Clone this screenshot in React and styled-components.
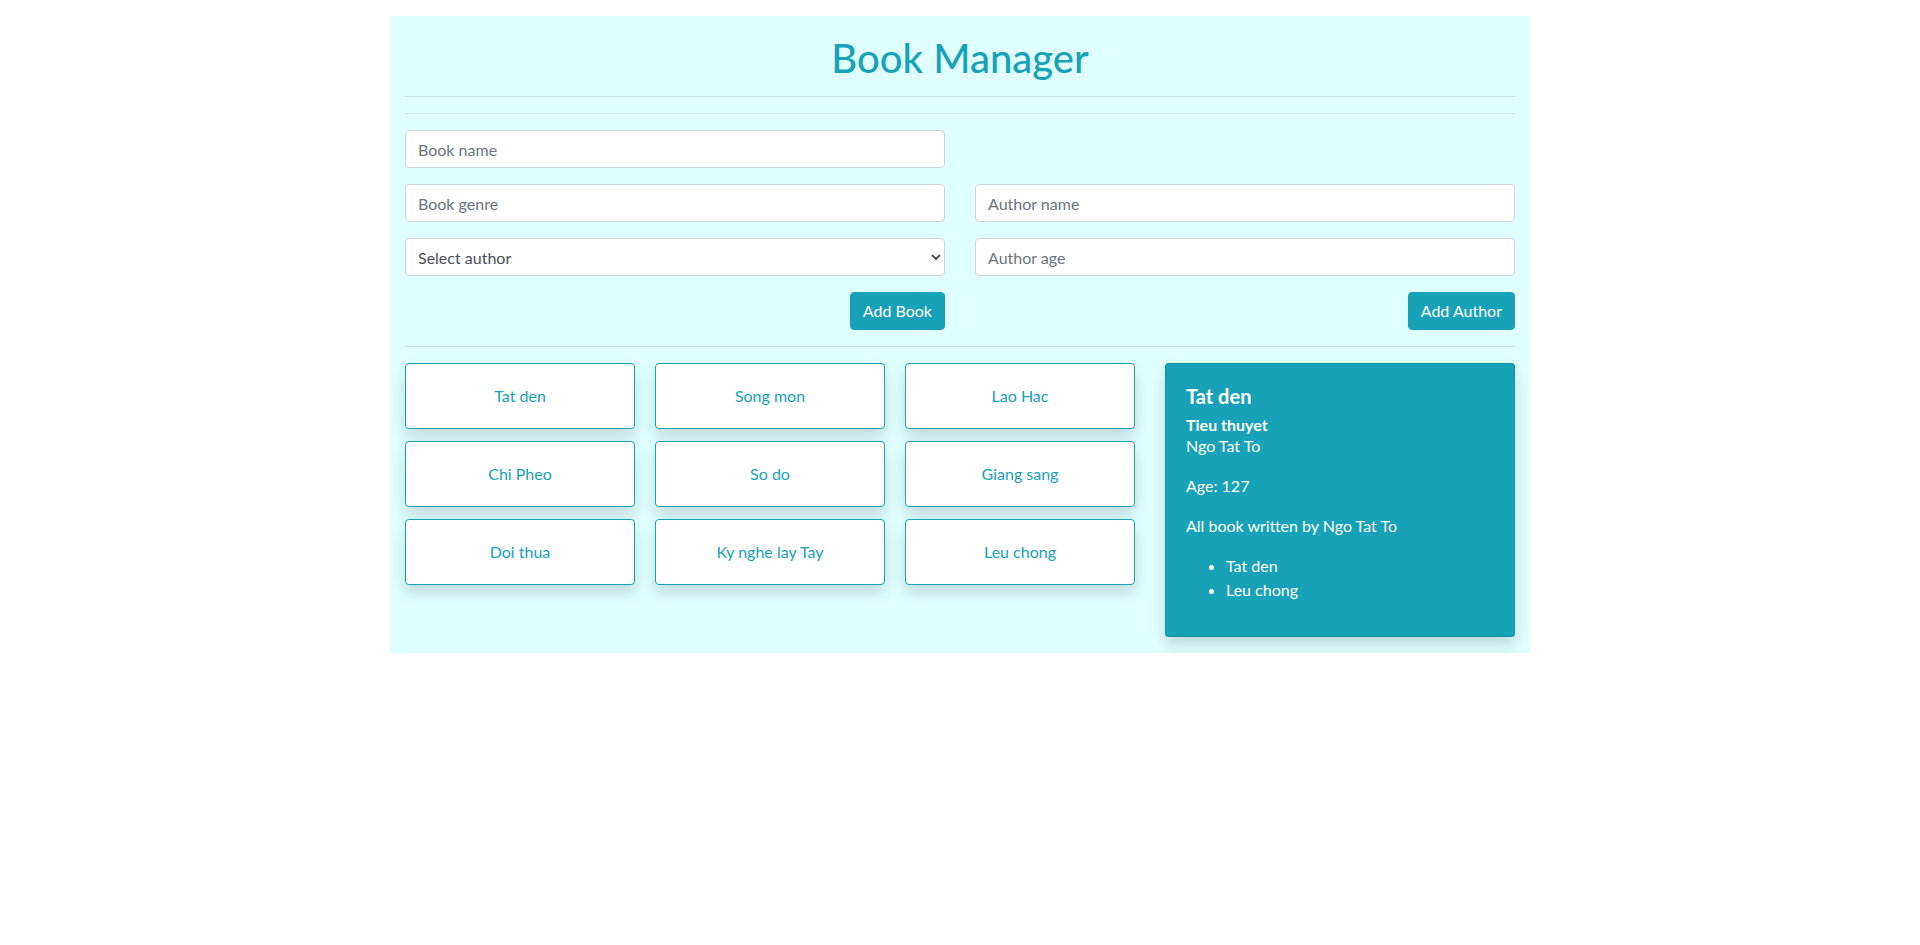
import React, { useState } from "react";
import styled, { createGlobalStyle } from "styled-components";

const GlobalStyle = createGlobalStyle`
  body {
    margin: 0;
    font-family: "Segoe UI", Lato, "Noto Sans", sans-serif;
    font-size: 16px;
    line-height: 1.5;
    color: #212529;
    background: #fff;
  }
  * { box-sizing: border-box; }
`;

const Page = styled.div`
  padding-top: 16px;
`;

const Container = styled.div`
  width: 1140px;
  margin: 0 auto;
  background-color: #e0ffff;
  padding: 0 15px 16px;
`;

const Title = styled.h1`
  margin: 0;
  padding-top: 18px;
  font-size: 40px;
  font-weight: 500;
  line-height: 48px;
  text-align: center;
  color: #17a2b8;
`;

const Divider = styled.hr`
  margin: ${(p) => p.$top || 16}px 0 16px;
  border: 0;
  border-top: 1px solid rgba(0, 0, 0, 0.1);
`;

const FormGrid = styled.div`
  display: grid;
  grid-template-columns: 1fr 1fr;
  column-gap: 30px;
  row-gap: 16px;
`;

const Input = styled.input`
  display: block;
  width: 100%;
  height: 38px;
  padding: 6px 12px;
  font-family: inherit;
  font-size: 16px;
  font-weight: 400;
  color: #495057;
  background: #fff;
  border: 1px solid #ced4da;
  border-radius: 4px;
  outline: none;
  &::placeholder {
    color: #6c757d;
  }
`;

const Select = styled.select`
  display: block;
  width: 100%;
  height: 38px;
  padding: 6px 8px;
  font-family: inherit;
  font-size: 16px;
  font-weight: 400;
  color: #495057;
  background: #fff;
  border: 1px solid #ced4da;
  border-radius: 4px;
  outline: none;
`;

const ButtonRow = styled.div`
  display: flex;
  justify-content: flex-end;
`;

const Button = styled.button`
  height: 38px;
  padding: 6px 12px;
  font-family: inherit;
  font-size: 16px;
  font-weight: 400;
  line-height: 24px;
  color: #fff;
  background-color: #17a2b8;
  border: 1px solid #17a2b8;
  border-radius: 4px;
  cursor: pointer;
`;

const Main = styled.div`
  display: grid;
  grid-template-columns: 730px 350px;
  column-gap: 30px;
  align-items: start;
`;

// css columns, like bootstrap card-columns
const BookColumns = styled.div`
  column-count: 3;
  column-gap: 20px;
`;

const BookCard = styled.div`
  display: inline-block;
  width: 100%;
  margin-bottom: 12px;
  padding: 20px;
  background: #fff;
  border: 1px solid #17a2b8;
  border-radius: 4px;
  color: #17a2b8;
  text-align: center;
  box-shadow: 0 8px 16px rgba(0, 0, 0, 0.15);
  cursor: pointer;
`;

const DetailCard = styled.div`
  padding: 20px;
  background-color: #17a2b8;
  border: 1px solid rgba(0, 0, 0, 0.125);
  border-radius: 4px;
  color: #fff;
  box-shadow: 0 8px 16px rgba(0, 0, 0, 0.15);

  h5 {
    margin: 0 0 7px;
    font-size: 20px;
    font-weight: 700;
    line-height: 24px;
  }
  h6 {
    margin: 0;
    font-size: 16px;
    font-weight: 700;
    line-height: 19px;
  }
  p {
    margin: 0 0 16px;
  }
  ul {
    margin: 0 0 14px;
    padding-left: 40px;
  }
`;

const books = [
  { name: "Tat den", genre: "Tieu thuyet", author: "Ngo Tat To" },
  { name: "Chi Pheo", genre: "Truyen ngan", author: "Nam Cao" },
  { name: "Doi thua", genre: "Truyen ngan", author: "Nam Cao" },
  { name: "Song mon", genre: "Tieu thuyet", author: "Nam Cao" },
  { name: "So do", genre: "Tieu thuyet", author: "Vu Trong Phung" },
  { name: "Ky nghe lay Tay", genre: "Phong su", author: "Vu Trong Phung" },
  { name: "Lao Hac", genre: "Truyen ngan", author: "Nam Cao" },
  { name: "Giang sang", genre: "Tho", author: "Tan Da" },
  { name: "Leu chong", genre: "Tieu thuyet", author: "Ngo Tat To" },
];

const ages = { "Ngo Tat To": 127, "Nam Cao": 106, "Vu Trong Phung": 111, "Tan Da": 134 };

const App = () => {
  const [selected, setSelected] = useState(books[0]);
  const authorBooks = books.filter((b) => b.author === selected.author);

  return (
    <Page>
      <GlobalStyle />
      <Container>
        <Title>Book Manager</Title>
        <Divider $top={14} />
        <Divider />

        <FormGrid>
          <Input placeholder="Book name" />
          <div />
          <Input placeholder="Book genre" />
          <Input placeholder="Author name" />
          <Select defaultValue="">
            <option value="">Select author</option>
            <option>Ngo Tat To</option>
            <option>Nam Cao</option>
            <option>Vu Trong Phung</option>
          </Select>
          <Input placeholder="Author age" />
          <ButtonRow>
            <Button>Add Book</Button>
          </ButtonRow>
          <ButtonRow>
            <Button>Add Author</Button>
          </ButtonRow>
        </FormGrid>

        <Divider />

        <Main>
          <BookColumns>
            {books.map((b) => (
              <BookCard key={b.name} onClick={() => setSelected(b)}>
                {b.name}
              </BookCard>
            ))}
          </BookColumns>

          <DetailCard>
            <h5>{selected.name}</h5>
            <h6>{selected.genre}</h6>
            <p>{selected.author}</p>
            <p>Age: {ages[selected.author]}</p>
            <p>All book written by {selected.author}</p>
            <ul>
              {authorBooks.map((b) => (
                <li key={b.name}>{b.name}</li>
              ))}
            </ul>
          </DetailCard>
        </Main>
      </Container>
    </Page>
  );
};

export default App;
